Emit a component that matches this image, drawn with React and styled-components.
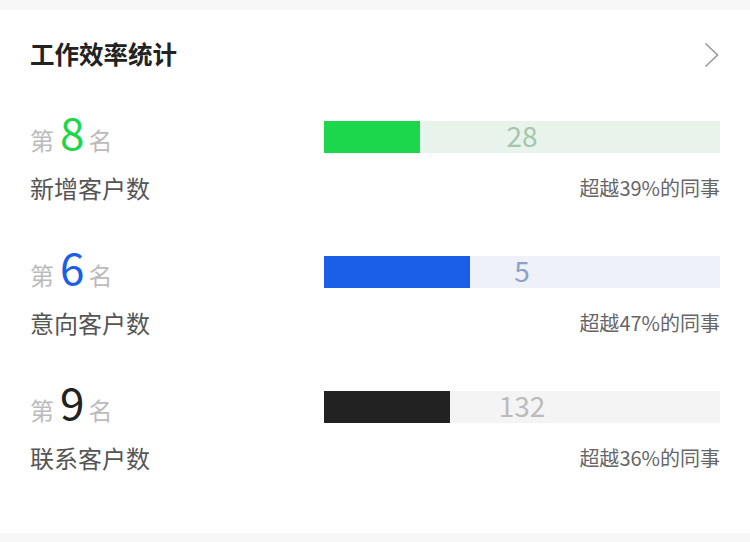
import React from "react";
import styled, { createGlobalStyle } from "styled-components";

const Global = createGlobalStyle`
  html, body { margin: 0; padding: 0; background: #f7f7f7; }
  body { font-family: "Noto Sans CJK SC", "Noto Sans", sans-serif; }
`;

const Page = styled.div`
  width: 750px;
  height: 542px;
  padding-top: 10px;
  box-sizing: border-box;
`;

const Card = styled.section`
  background: #fff;
  height: 523px;
  padding: 0 30px;
  box-sizing: border-box;
`;

const Header = styled.div`
  height: 88px;
  display: flex;
  align-items: center;
  justify-content: space-between;
`;

const Title = styled.h2`
  margin: 0;
  font-size: 24.5px;
  font-weight: 700;
  color: #222;
  line-height: 1;
`;

const Chevron = styled.svg`
  width: 16px;
  height: 26px;
  margin-top: 2px;
`;

const Row = styled.div`
  display: grid;
  grid-template-columns: 294px 1fr;
  grid-template-rows: 32px 34px;
  row-gap: 18px;
  padding: 23px 0 28px;
`;

const Rank = styled.div`
  display: flex;
  align-items: baseline;
  height: 32px;
  margin-top: -6px;
  line-height: 32px;
  font-size: 24px;
  color: #bbb;
`;

const RankNum = styled.span`
  font-size: 44px;
  margin: 0 4px 0 6px;
  color: ${(p) => p.$color};
`;

const Track = styled.div`
  position: relative;
  height: 32px;
  background: ${(p) => p.$track};
`;

const Fill = styled.div`
  height: 100%;
  background: ${(p) => p.$color};
`;

const TrackLabel = styled.span`
  position: absolute;
  inset: 0;
  display: flex;
  align-items: center;
  justify-content: center;
  padding-bottom: 4px;
  font-size: 28px;
  color: ${(p) => p.$color};
  line-height: 1;
`;

const Name = styled.div`
  font-size: 24px;
  color: #555;
  line-height: 34px;
`;

const Beat = styled.div`
  font-size: 20px;
  color: #666;
  line-height: 34px;
  text-align: right;
`;

const rows = [
  { rank: 8, name: "新增客户数", value: 28, pct: 39, fill: 96, color: "#1cd74b", track: "#e8f3eb", label: "#a5c5ad" },
  { rank: 6, name: "意向客户数", value: 5, pct: 47, fill: 146, color: "#1b5ee8", track: "#eef1f7", label: "#8ca2c8" },
  { rank: 9, name: "联系客户数", value: 132, pct: 36, fill: 126, color: "#222222", track: "#f4f4f4", label: "#bbbbbb" },
];

export default function App() {
  return (
    <>
      <Global />
      <Page>
        <Card>
          <Header>
            <Title>工作效率统计</Title>
            <Chevron viewBox="0 0 16 26">
              <polyline points="1.5,1.5 13.5,13 1.5,24.5" fill="none" stroke="#9a9a9a" strokeWidth="1.6" />
            </Chevron>
          </Header>
          {rows.map((r) => (
            <Row key={r.name}>
              <Rank>
                第<RankNum $color={r.color}>{r.rank}</RankNum>名
              </Rank>
              <Track $track={r.track}>
                <Fill $color={r.color} style={{ width: `${r.fill}px` }} />
                <TrackLabel $color={r.label}>{r.value}</TrackLabel>
              </Track>
              <Name>{r.name}</Name>
              <Beat>超越{r.pct}%的同事</Beat>
            </Row>
          ))}
        </Card>
      </Page>
    </>
  );
}
